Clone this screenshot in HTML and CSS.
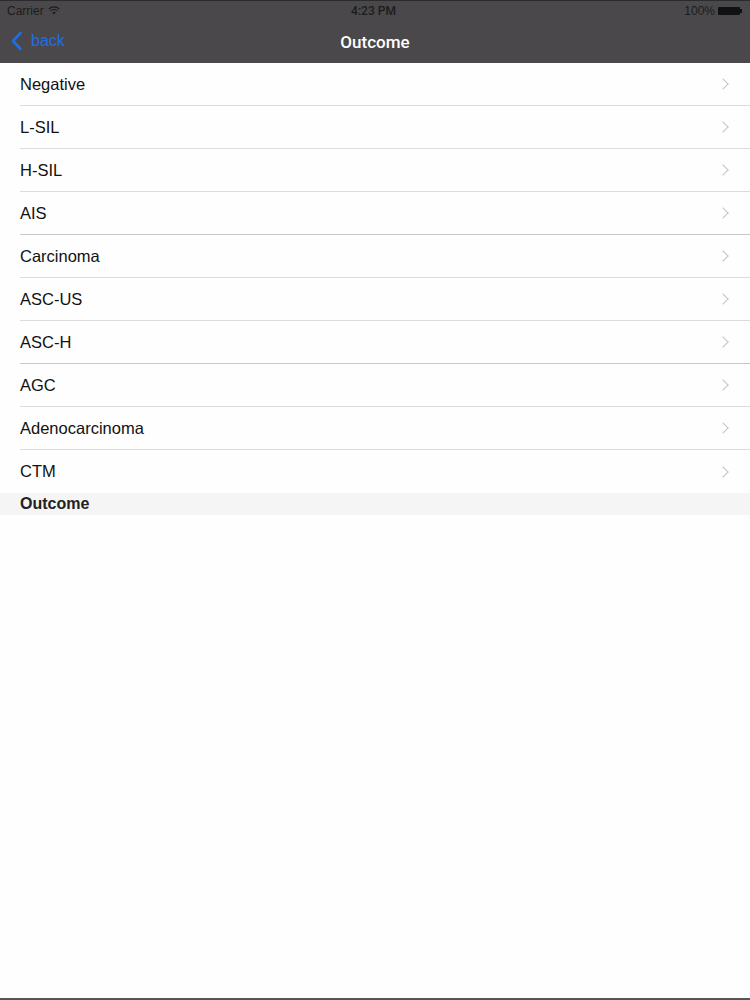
FILE: index.html
```html
<!DOCTYPE html>
<html>
<head>
    <title>Outcome</title>
    <link rel="stylesheet" href="styles.css">
</head>
<body>
<div class="header">
    <div class="status-bar">
        <div class="status-left">
            Carrier
            <svg class="wifi" width="12" height="9" viewBox="0 0 12 9">
                <path d="M6 8.6 L4.2 6.6 A2.6 2.6 0 0 1 7.8 6.6 Z" fill="#1c1c1c"/>
                <path d="M2.6 4.9 A4.9 4.9 0 0 1 9.4 4.9" stroke="#1c1c1c" stroke-width="1.3" fill="none"/>
                <path d="M0.8 3 A7.5 7.5 0 0 1 11.2 3" stroke="#1c1c1c" stroke-width="1.3" fill="none"/>
            </svg>
        </div>
        <div class="status-time">4:23 PM</div>
        <div class="status-right">
            100%
            <span class="battery"></span>
        </div>
    </div>
    <div class="nav-bar">
        <div class="back">
            <svg width="13" height="20" viewBox="0 0 13 20">
                <path d="M10.5 2 L3 10 L10.5 18" stroke="#1f6fe0" stroke-width="2.6" fill="none" stroke-linecap="round" stroke-linejoin="round"/>
            </svg>
            <span class="back-label">back</span>
        </div>
        <div class="nav-title">Outcome</div>
    </div>
</div>

<div class="list">
    <div class="row"><span>Negative</span><span class="chevron"></span></div>
    <div class="row"><span>L-SIL</span><span class="chevron"></span></div>
    <div class="row"><span>H-SIL</span><span class="chevron"></span></div>
    <div class="row dark"><span>AIS</span><span class="chevron"></span></div>
    <div class="row"><span>Carcinoma</span><span class="chevron"></span></div>
    <div class="row"><span>ASC-US</span><span class="chevron"></span></div>
    <div class="row dark"><span>ASC-H</span><span class="chevron"></span></div>
    <div class="row"><span>AGC</span><span class="chevron"></span></div>
    <div class="row"><span>Adenocarcinoma</span><span class="chevron"></span></div>
    <div class="row last"><span>CTM</span><span class="chevron"></span></div>
</div>
<div class="section-footer">Outcome</div>

<div class="spacer"></div>
<div class="bottom-line"></div>
</body>
</html>
```

FILE: styles.css
```css
html, body {
margin: 0;
padding: 0;
}

body {
width: 750px;
height: 1000px;
display: flex;
flex-direction: column;
background-color: #fefefe;
font-family: "Liberation Sans", Arial, sans-serif;
color: #111;
}

.header {
background-color: #4a484b;
border-top: 1px solid #2b2a2c;
height: 62px;
display: flex;
flex-direction: column;
}

.status-bar {
height: 19px;
display: flex;
align-items: center;
justify-content: space-between;
padding: 0 10px 0 7px;
font-size: 12px;
color: #1c1c1c;
}

.status-left {
display: flex;
align-items: center;
gap: 4px;
width: 100px;
}

.status-time {
font-family: Roboto, "Liberation Sans", sans-serif;
font-weight: 500;
font-size: 12px;
}

.status-right {
display: flex;
align-items: center;
justify-content: flex-end;
gap: 3px;
width: 100px;
}

.battery {
width: 22px;
height: 8px;
border-radius: 1px;
background-color: #111;
position: relative;
}

.battery::after {
content: "";
position: absolute;
right: -2px;
top: 2px;
width: 2px;
height: 4px;
background-color: #111;
}

.nav-bar {
flex: 1;
display: flex;
align-items: center;
justify-content: center;
position: relative;
}

.back {
position: absolute;
left: 10px;
top: 11px;
display: flex;
align-items: center;
gap: 8px;
}

.back-label {
color: #1f6fe0;
font-size: 16px;
}

.nav-title {
color: #fff;
font-family: Roboto, "Liberation Sans", sans-serif;
font-size: 17px;
font-weight: 500;
margin-top: 1px;
}

.list {
display: flex;
flex-direction: column;
}

.row {
height: 42px;
margin-left: 20px;
padding-right: 20px;
border-bottom: 1px solid #dddcdd;
display: flex;
align-items: center;
justify-content: space-between;
font-size: 16.5px;
}

.row.dark {
border-bottom-color: #c9c8c9;
}

.row.last {
border-bottom: none;
height: 43px;
}

.chevron {
width: 7px;
height: 7px;
border-top: 1.5px solid #c4c4c8;
border-right: 1.5px solid #c4c4c8;
transform: rotate(45deg);
margin-right: 3px;
}

.section-footer {
height: 22px;
background-color: #f6f5f6;
padding-left: 20px;
display: flex;
align-items: center;
font-size: 16px;
font-weight: bold;
color: #222;
}

.spacer {
flex: 1;
}

.bottom-line {
height: 2px;
background-color: #555;
}
```
